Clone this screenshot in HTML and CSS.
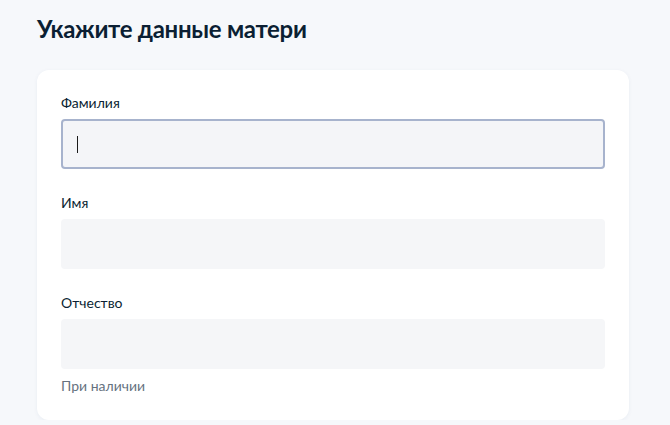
FILE: index.html
```html
<!DOCTYPE html>
<html lang="ru">
<head>
<meta charset="utf-8">
<title>Укажите данные матери</title>
<link rel="stylesheet" href="styles.css">
</head>
<body>
<main class="page">
  <h1 class="title">Укажите данные матери</h1>
  <section class="card">
    <div class="field">
      <label class="label">Фамилия</label>
      <div class="input input--focus"><span class="caret"></span></div>
    </div>
    <div class="field">
      <label class="label">Имя</label>
      <div class="input"></div>
    </div>
    <div class="field field--last">
      <label class="label">Отчество</label>
      <div class="input"></div>
      <div class="hint">При наличии</div>
    </div>
  </section>
</main>
</body>
</html>
```
FILE: styles.css
```css
html, body {
  margin: 0;
  padding: 0;
  background: #f6f8fb;
}
body {
  font-family: Lato, "Noto Sans", sans-serif;
  color: #0b1f33;
}
.page {
  padding: 13px 0 0 37px;
  width: 592px;
}
.title {
  margin: 0;
  font-size: 24px;
  line-height: 32px;
  font-weight: 700;
  color: #0b1f33;
  letter-spacing: -0.3px;
}
.card {
  margin-top: 25px;
  background: #ffffff;
  border-radius: 12px;
  box-shadow: 0 1px 4px rgba(30, 60, 120, 0.06);
  padding: 23px 24px 24px;
  display: flex;
  flex-direction: column;
  gap: 24px;
}
.field {
  display: flex;
  flex-direction: column;
}
.label {
  font-size: 14px;
  line-height: 20px;
  color: #0b1f33;
  margin-bottom: 6px;
}
.input {
  height: 50px;
  box-sizing: border-box;
  background: #f5f6f8;
  border-radius: 4px;
  display: flex;
  align-items: center;
  padding: 0 15px;
}
.input--focus {
  border: 2px solid #a7b3cd;
  background: #f4f5f8;
  padding: 0 14px;
}
.caret {
  display: block;
  width: 1px;
  height: 17px;
  background: #1a1a1a;
}
.hint {
  margin-top: 7px;
  font-size: 14px;
  line-height: 20px;
  color: #66727f;
}
```
